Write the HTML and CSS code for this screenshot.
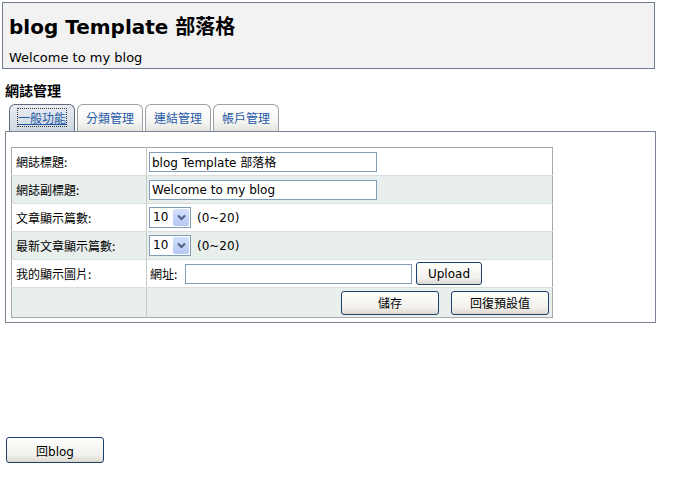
FILE: index.html
```html
<!DOCTYPE html>
<html lang="zh-Hant">
<head>
<meta charset="utf-8">
<title>blog Template 部落格</title>
<link rel="stylesheet" href="styles.css">
</head>
<body>
<div class="header">
  <h1 class="title">blog Template 部落格</h1>
  <p class="subtitle">Welcome to my blog</p>
</div>
<h2 class="section">網誌管理</h2>
<div class="tabs">
  <a class="tab active"><span class="focus">一般功能</span></a>
  <a class="tab">分類管理</a>
  <a class="tab">連結管理</a>
  <a class="tab">帳戶管理</a>
</div>
<div class="panel">
  <table class="form">
    <tr>
      <td class="label">網誌標題:</td>
      <td class="value"><span class="input">blog Template 部落格</span></td>
    </tr>
    <tr class="alt">
      <td class="label">網誌副標題:</td>
      <td class="value"><span class="input">Welcome to my blog</span></td>
    </tr>
    <tr>
      <td class="label">文章顯示篇數:</td>
      <td class="value"><span class="select"><span class="sel-val">10</span><span class="sel-arrow"><svg width="9" height="7" viewBox="0 0 9 7"><path d="M1 1.5 L4.5 5 L8 1.5" fill="none" stroke="#4d6185" stroke-width="2"/></svg></span></span><span class="range">(0~20)</span></td>
    </tr>
    <tr class="alt">
      <td class="label">最新文章顯示篇數:</td>
      <td class="value"><span class="select"><span class="sel-val">10</span><span class="sel-arrow"><svg width="9" height="7" viewBox="0 0 9 7"><path d="M1 1.5 L4.5 5 L8 1.5" fill="none" stroke="#4d6185" stroke-width="2"/></svg></span></span><span class="range">(0~20)</span></td>
    </tr>
    <tr>
      <td class="label">我的顯示圖片:</td>
      <td class="value"><span class="url-label">網址:</span><span class="input url"></span><button class="btn upload">Upload</button></td>
    </tr>
    <tr class="alt last">
      <td class="label"></td>
      <td class="value actions"><button class="btn wide">儲存</button><button class="btn wide">回復預設值</button></td>
    </tr>
  </table>
</div>
<button class="btn back">回blog</button>
</body>
</html>
```

FILE: styles.css
```css
* { box-sizing: border-box; }

body {
  margin: 0;
  font-family: "DejaVu Sans", "Noto Sans CJK TC", sans-serif;
  font-size: 12px;
  color: #000;
  background: #fff;
}

.header {
  margin: 2px 0 0 2px;
  width: 653px;
  border: 1px solid #6e7a96;
  background: #f2f2f2;
  padding: 0 0 2px 6px;
}

.title {
  margin: 11px 0 0;
  font-family: "DejaVu Sans", "Noto Sans CJK TC", sans-serif;
  font-size: 20px;
  line-height: 26px;
  font-weight: bold;
}

.subtitle {
  margin: 10px 0 0;
  font-size: 13px;
  line-height: 16px;
}

.section {
  margin: 12px 0 0 5px;
  font-family: "Noto Sans CJK TC", sans-serif;
  font-size: 14px;
  line-height: 18px;
  font-weight: bold;
}

.tabs {
  display: flex;
  align-items: flex-end;
  gap: 1px;
  margin: 5px 0 0 9px;
  height: 27px;
}

.tab {
  height: 27px;
  padding: 0 8px;
  border: 1px solid #9aa1a6;
  border-bottom: none;
  border-radius: 6px 6px 0 0;
  background: linear-gradient(#ffffff, #f6f6f3 60%, #e4e4df);
  color: #1f5aa8;
  font-family: "Noto Sans CJK TC", sans-serif;
  font-size: 12px;
  line-height: 26px;
}

.tab + .tab { margin-left: 1px; }

.tab.active {
  border-color: #5f6b7c;
  background: linear-gradient(#e9edf2, #cfd7e0);
}

.focus {
  outline: 1px dotted #333;
  text-decoration: underline;
}

.panel {
  margin-left: 5px;
  width: 651px;
  height: 192px;
  border: 1px solid #7b8495;
  padding: 15px 5px 0;
}

.form {
  width: 542px;
  border-collapse: collapse;
  border: 1px solid #a3a9ae;
}

.form td {
  height: 28px;
  border-bottom: 1px solid #dadddb;
  padding: 0;
  vertical-align: middle;
  font-family: "Noto Sans CJK TC", sans-serif;
  font-size: 12px;
}

.form tr.alt td { background: #e9efed; }
.form tr.last td { height: 30px; border-bottom: none; }

.form td.label {
  width: 135px;
  padding-left: 4px;
  border-right: 1px solid #c5cac7;
}

.form td.value {
  padding-left: 2px;
}

.input {
  display: inline-flex;
  align-items: center;
  width: 228px;
  height: 20px;
  border: 1px solid #7f9db9;
  background: #fff;
  padding-left: 2px;
  font-family: "DejaVu Sans", "Noto Sans CJK TC", sans-serif;
  font-size: 12px;
  vertical-align: middle;
}

.select {
  display: inline-flex;
  align-items: stretch;
  width: 42px;
  height: 21px;
  border: 1px solid #7f9db9;
  background: #fff;
  vertical-align: middle;
}

.sel-val {
  flex: 1;
  padding-left: 3px;
  font-family: "DejaVu Sans", sans-serif;
  font-size: 12px;
  line-height: 19px;
}

.sel-arrow {
  width: 16px;
  margin: 1px;
  display: flex;
  align-items: center;
  justify-content: center;
  background: linear-gradient(#d3e0fb, #b5c9f3);
  border-radius: 2px;
}

.range {
  margin-left: 6px;
  font-family: "DejaVu Sans", sans-serif;
  vertical-align: middle;
}

.url-label {
  display: inline-block;
  width: 36px;
  padding-left: 1px;
  vertical-align: middle;
}

.input.url { width: 227px; }

.btn {
  font-family: "DejaVu Sans", "Noto Sans CJK TC", sans-serif;
  font-size: 12px;
  color: #000;
  background: linear-gradient(#ffffff, #f2f1ec 70%, #dcd8ce);
  border: 1px solid #1c3f6e;
  border-radius: 3px;
  padding: 0;
  vertical-align: middle;
}

.upload {
  width: 66px;
  height: 23px;
  margin-left: 4px;
}

.actions {
  text-align: right;
}

.form td.actions { padding-right: 3px; }

.wide {
  width: 98px;
  height: 24px;
  margin-left: 12px;
}

.back {
  display: block;
  margin: 114px 0 0 6px;
  width: 98px;
  height: 26px;
}
```
